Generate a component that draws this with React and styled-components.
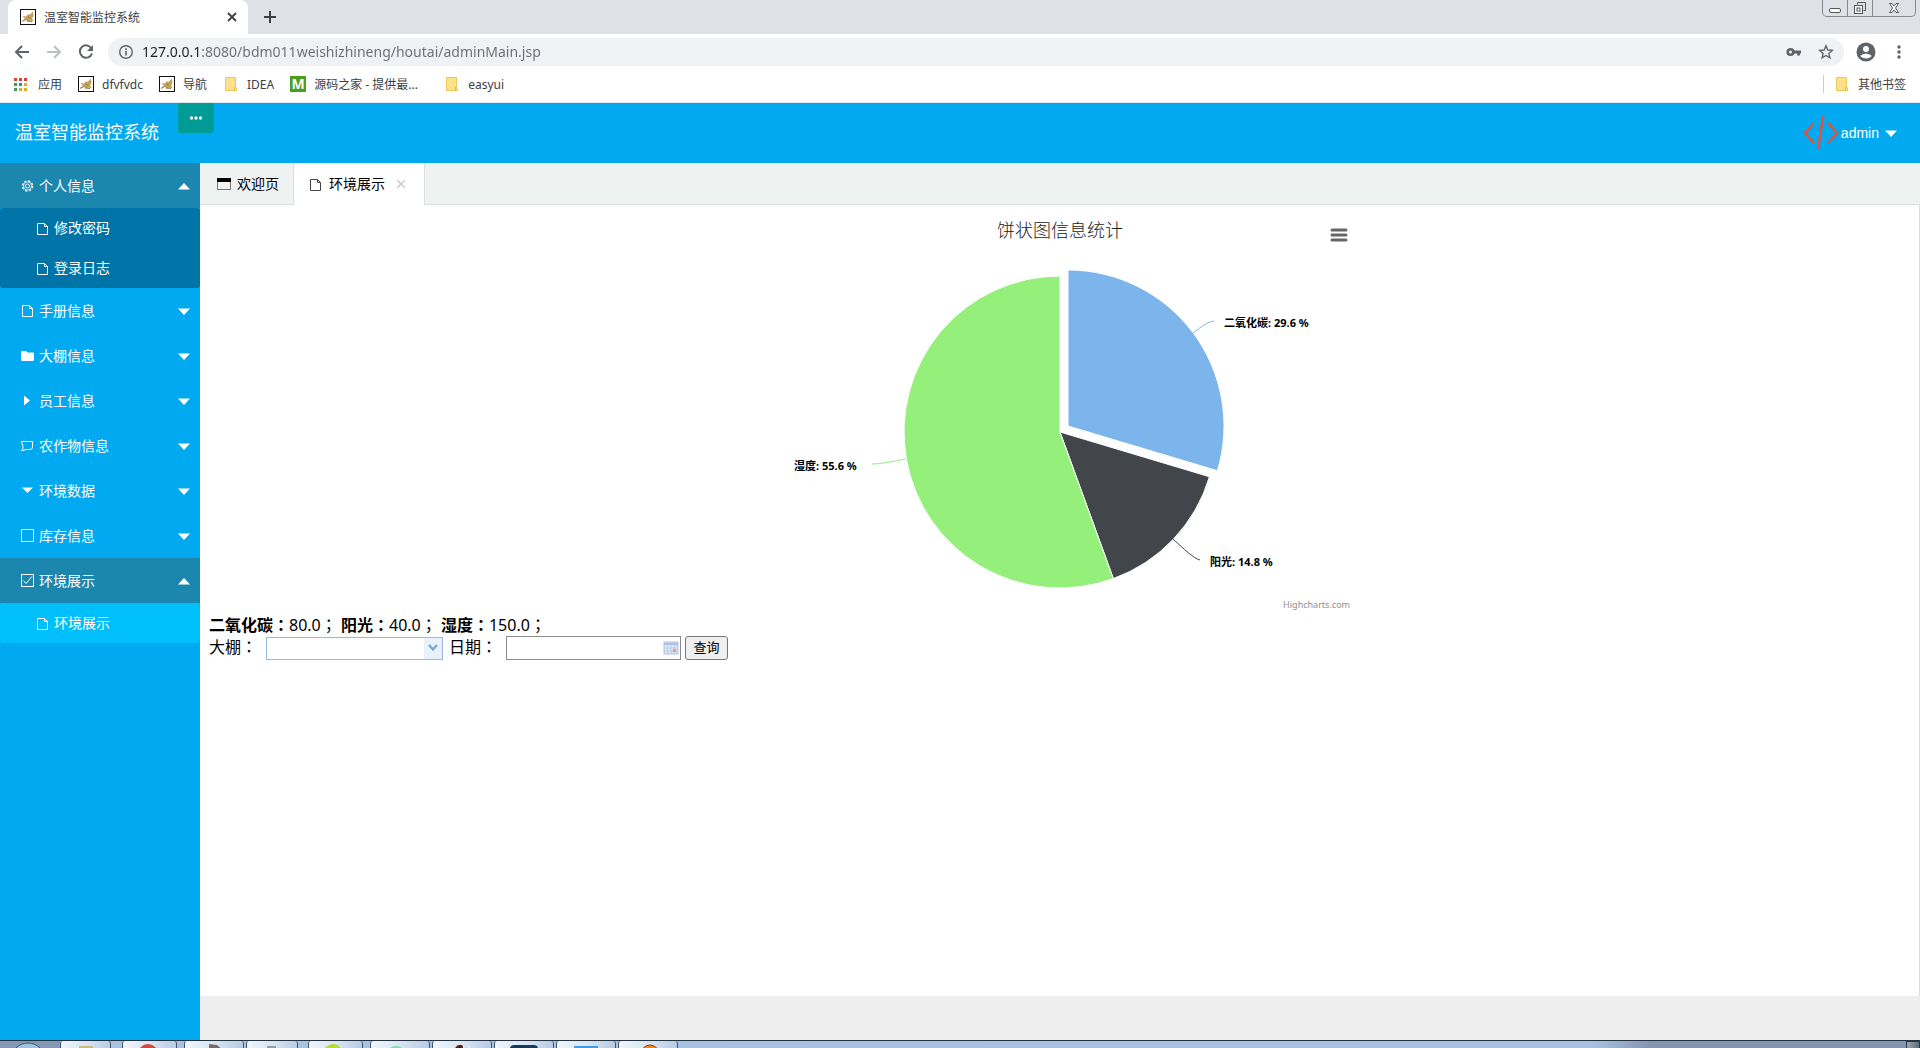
import React, { useState } from "react";
import styled, { createGlobalStyle } from "styled-components";

const Global = createGlobalStyle`
  *, *::before, *::after { box-sizing: border-box; }
  body { margin: 0; background: #fff; }
  body, button, input, select { font-family: "Noto Sans", "Noto Sans CJK SC", sans-serif; }
  button { cursor: pointer; }
`;

const Screen = styled.div`
  display: flex;
  flex-direction: column;
  min-height: 100vh;
`;

/* ---------- browser frame ---------- */

const TabStrip = styled.div`
  display: flex;
  height: 34px;
  padding-left: 8px;
  background: #dee1e6;
`;

const BrowserTab = styled.div`
  display: flex;
  align-items: center;
  gap: 8px;
  width: 240px;
  padding: 0 10px 0 12px;
  background: #fff;
  border-radius: 8px 8px 0 0;
  color: #3c4043;
  font-size: 12px;
`;

const TabTitle = styled.span`
  flex: 1;
`;

const PlainButton = styled.button`
  display: flex;
  align-items: center;
  justify-content: center;
  width: ${(p) => p.$w || 24}px;
  height: ${(p) => p.$h || 24}px;
  padding: 0;
  border: 0;
  background: none;
  color: ${(p) => p.$color || "#5f6368"};
`;

const NewTab = styled(PlainButton)`
  align-self: center;
  margin-left: 10px;
`;

const WindowControls = styled.div`
  display: flex;
  height: 17px;
  margin: 0 4px 0 auto;
  border: 1px solid #85888d;
  border-top: 0;
  border-radius: 0 0 5px 5px;

  button + button { border-left: 1px solid #85888d; }
`;

const Toolbar = styled.div`
  display: flex;
  align-items: center;
  height: 36px;
  padding: 0 0 0 10px;
  background: #fff;
`;

const NavButtons = styled.div`
  display: flex;
  gap: 8px;
`;

const Omnibox = styled.label`
  display: flex;
  flex: 1;
  align-items: center;
  gap: 8px;
  height: 28px;
  margin: 0 10px;
  padding: 0 6px 0 10px;
  background: #f0f2f6;
  border-radius: 14px;
  color: #5f6368;
`;

const Address = styled.input`
  flex: 1;
  min-width: 0;
  padding: 0;
  border: 0;
  outline: 0;
  color: transparent;
  background: linear-gradient(90deg, #202124 60px, #6a6e73 60px);
  background-clip: text;
  -webkit-background-clip: text;
  font-size: 14px;
  line-height: 20px;
`;

const Bookmarks = styled.nav`
  display: flex;
  align-items: center;
  gap: 16px;
  height: 33px;
  padding: 0 14px 4px;
  background: #fff;
  border-bottom: 1px solid #dfe9ef;
`;

const Bookmark = styled.a`
  display: flex;
  align-items: center;
  gap: 8px;
  min-width: ${(p) => p.$min || 0}px;
  color: #3c4043;
  font-size: 12px;
  text-decoration: none;
  white-space: nowrap;
`;

const OtherBookmarks = styled.div`
  margin-left: auto;
  padding-left: 10px;
  border-left: 1px solid #c9ccd1;
`;

/* ---------- application ---------- */

const Header = styled.header`
  display: flex;
  height: 60px;
  padding: 0 23px 0 15px;
  background: #01aaf0;
  color: #fff;
`;

const Brand = styled.h1`
  width: 163px;
  margin: 0;
  font-size: 18px;
  font-weight: 400;
  line-height: 58px;
`;

const MoreButton = styled.button`
  display: flex;
  align-items: center;
  justify-content: center;
  width: 36px;
  height: 30px;
  padding: 0;
  border: 0;
  border-radius: 2px;
  background: #009b95;
  color: #fff;
`;

const UserMenu = styled.button`
  display: flex;
  align-items: center;
  gap: 2px;
  margin-left: auto;
  padding: 0;
  border: 0;
  background: none;
  color: #fff;
  font-family: "Liberation Sans", Arial, sans-serif;
  font-size: 14px;
`;

const Body = styled.div`
  display: flex;
  flex: 1;
`;

const Sidebar = styled.nav`
  width: 200px;
  background: #01aaf0;
  color: #fff;
`;

const MenuHead = styled.button`
  display: flex;
  align-items: center;
  gap: 4px;
  width: 100%;
  height: 45px;
  padding: 0 10px 0 20px;
  border: 0;
  background: ${(p) => (p.$open ? "#1b86ae" : "transparent")};
  color: #fff;
  font-size: 14px;
  text-align: left;

  svg:last-child { margin-left: auto; }
`;

const Label = styled.span`
  padding-bottom: 2px;
`;

const SubMenu = styled.div`
  overflow: hidden;
  border-radius: 3px;
  background: #0074a6;
`;

const SubLink = styled.a`
  display: flex;
  align-items: center;
  gap: 4px;
  height: 40px;
  padding-left: 35px;
  background: ${(p) => (p.$active ? "#00bffb" : "transparent")};
  color: #fff;
  font-size: 14px;
  text-decoration: none;
`;

const Main = styled.main`
  display: flex;
  flex: 1;
  flex-direction: column;
  min-width: 0;
  background: #eee;
`;

const PageTabs = styled.div`
  display: flex;
  height: 42px;
  background: #eef2f0;
  border-bottom: 1px solid #dcdfdd;
`;

const PageTab = styled.div`
  display: flex;
  align-items: center;
  gap: 6px;
  height: ${(p) => (p.$active ? 42 : 41)}px;
  padding: ${(p) => (p.$active ? "0 13px 0 14px" : "0 14px 0 17px")};
  border-right: 1px solid #dcdfdd;
  background: ${(p) => (p.$active ? "#fff" : "transparent")};
  color: #000;
  font-size: 14px;
`;

const Content = styled.section`
  flex: 1;
  margin-bottom: 44px;
  padding: 8px 8px 8px 9px;
  border-right: 1px solid #ddd;
  background: #fff;
  color: #000;
  font-size: 16px;
`;

const ChartBox = styled.figure`
  position: relative;
  width: 600px;
  height: 400px;
  margin: 0 auto;
`;

const ChartMenu = styled(PlainButton)`
  position: absolute;
  top: 10px;
  right: 9px;
`;

const Summary = styled.p`
  margin: 0;
  line-height: 22px;
`;

/* colon and semicolon centred in their square */
const Mark = styled.span`
  font-family: "Noto Sans CJK TC", sans-serif;
`;

const Query = styled.form`
  display: flex;
  align-items: center;
  height: 24px;
`;

const FieldLabel = styled.label`
  padding-bottom: 3px;
  line-height: 20px;
`;

const Field = styled.div`
  display: flex;
  align-items: center;
  height: ${(p) => p.$h}px;
  width: ${(p) => p.$w}px;
  margin: 0 ${(p) => p.$after}px 0 ${(p) => p.$before}px;
  border: 1px solid ${(p) => p.$line};
  position: relative;

  select, input {
    flex: 1;
    min-width: 0;
    height: 100%;
    padding: 0 4px;
    border: 0;
    outline: 0;
    appearance: none;
    background: transparent;
    font-size: 12px;
  }
`;

const ComboArrow = styled.span`
  position: absolute;
  inset: 0 0 0 auto;
  display: flex;
  align-items: center;
  justify-content: center;
  width: 18px;
  background: #e9f1fc;
  pointer-events: none;
`;

const QueryButton = styled.button`
  width: 43px;
  height: 24px;
  padding: 0 0 2px;
  border: 1px solid #767676;
  border-radius: 3px;
  background: #efefef;
  color: #000;
  font-size: 13px;
  line-height: 20px;
`;

/* ---------- desktop task bar ---------- */

const TaskBar = styled.footer`
  display: flex;
  height: 8px;
  overflow: hidden;
  border-top: 1px solid #23303f;
  background: linear-gradient(90deg, #a9c3e0 0, #a6c2e0 83%, #8494b0 86%, #8494b0 100%);
`;

const StartArea = styled.div`
  display: flex;
  flex: none;
  justify-content: center;
  width: 60px;
  background: #8398b4;
`;

const TaskButton = styled.button`
  display: flex;
  flex: none;
  justify-content: center;
  width: ${(p) => p.$w}px;
  height: 40px;
  margin-right: ${(p) => p.$gap}px;
  padding: 0;
  border: 1px solid #3f536b;
  border-top: 0;
  border-radius: 3px;
  background: linear-gradient(100deg, #f1f6fb 0, #d6e3f2 50%, #afc6e2 100%);
`;

const ShowDesktop = styled.button`
  width: 14px;
  height: 40px;
  margin-left: auto;
  padding: 0;
  border: 1px solid #2b3947;
  background: linear-gradient(90deg, #9aa6ae, #5f6d78);
`;

/* ---------- drawings ---------- */

const Svg = ({ w = 16, h = w, box, children, ...rest }) => (
  <svg width={w} height={h} viewBox={box || `0 0 ${w} ${h}`} fill="none" aria-hidden="true" {...rest}>
    {children}
  </svg>
);

const CatIcon = () => (
  <Svg w={16}>
    <rect x="0.5" y="0.5" width="15" height="15" fill="#fff" stroke="#111" />
    <path d="M2 12 L5 10 L2.500 7 L6 7.500 L8 5 L9 6 L11 4.500 L13 2.500 L13.500 6 L13 8 L12 9.500 L14 12.500 L10 11.500 L8 12.500 L6 11 Z" fill="#c3a259" />
    <path d="M2 12.500 L5.500 10.500 M8 8 L9.500 9 M7 12 L12 12.500" stroke="#6b5832" strokeWidth="0.800" />
  </Svg>
);

const AppsIcon = () => {
  const colors = ["#d8443b", "#d8443b", "#d8443b", "#3c9e57", "#3b7de0", "#e3a928", "#3c9e57", "#e3a928", "#e3a928"];
  return (
    <Svg w={16}>
      {colors.map((c, i) => (
        <rect key={i} x={(i % 3) * 5} y={2 + Math.floor(i / 3) * 5} width="3" height="3" fill={c} />
      ))}
    </Svg>
  );
};

const FolderIcon = () => (
  <Svg w={16}>
    <path d="M2.500 1.500 H12.500 V11 L13.500 12 V14.500 H2.500 Z" fill="#fde08a" stroke="#ecc75a" />
    <path d="M11.500 14 V11" stroke="#e0b445" />
  </Svg>
);

const MBadge = styled.span`
  width: 16px;
  height: 16px;
  background: #4a9e22;
  color: #fff;
  font-size: 14px;
  font-weight: 700;
  line-height: 16px;
  text-align: center;
`;

const FileIcon = ({ color = "#fff" }) => (
  <Svg w={15}>
    <path d="M2.500 2.500 H9.500 L12.500 5.500 V13.500 H2.500 Z M9.500 2.500 V5.500 H12.500" stroke={color} />
  </Svg>
);

const GearIcon = () => (
  <Svg w={15}>
    <circle cx="7.500" cy="8" r="5" stroke="#fff" strokeWidth="1.400" strokeDasharray="2.300 1.627" />
    <circle cx="7.500" cy="8" r="4" stroke="#fff" strokeWidth="0.700" />
    <circle cx="7.500" cy="8" r="2" stroke="#fff" strokeWidth="0.900" />
  </Svg>
);

const SolidFolder = () => (
  <Svg w={15}>
    <path d="M1 4 Q1 3 2 3 H6 L7.500 4.500 H13 Q14 4.500 14 5.500 V12 Q14 13 13 13 H2 Q1 13 1 12 Z" fill="#fff" />
  </Svg>
);

const RightIcon = () => (
  <Svg w={15}>
    <path d="M4 2.500 L10 7.500 L4 12.500 Z" fill="#fff" />
  </Svg>
);

const DialogIcon = () => (
  <Svg w={15}>
    <path d="M1.500 3.500 H12.500 V9 Q12.500 11.500 10 11.500 H6 Q4.500 12.500 1.500 12.500 Q3.500 11 3 8.500 Z" stroke="#fff" />
  </Svg>
);

const DownIcon = () => (
  <Svg w={15}>
    <path d="M2 4.500 H13 L7.500 10 Z" fill="#fff" />
  </Svg>
);

const BoxIcon = ({ checked }) => (
  <Svg w={15}>
    <rect x="1.500" y="1.500" width="12" height="12" stroke="#fff" />
    {checked && <path d="M3.500 7.500 L6 10.500 L12 3.500" stroke="#fff" />}
  </Svg>
);

const Caret = ({ up }) => (
  <Svg w={12} h={8}>
    <path d={up ? "M0 7.500 L6 1 L12 7.500 Z" : "M0 1.500 H12 L6 8 Z"} fill="#fff" />
  </Svg>
);

const CodeLogo = () => (
  <Svg w={36} h={34}>
    <path d="M11 7 L2 17 L11 27 M25 7 L34 17 L25 27 M20 0 L15 34" stroke="#e2513d" strokeWidth="2.400" />
  </Svg>
);

const WindowIcon = () => (
  <Svg w={14} h={12}>
    <rect x="0.500" y="0.500" width="13" height="11" fill="#f4f4f4" stroke="#777" />
    <rect width="14" height="4" fill="#000" />
  </Svg>
);

const CalendarIcon = () => (
  <Svg w={16}>
    <rect x="1" y="2" width="14" height="12" fill="#dfe9f8" stroke="#a9bfe2" />
    <path d="M1 4 H15" stroke="#a9bfe6" strokeWidth="2" />
    <path d="M4.500 5 V14 M8 5 V14 M11.500 5 V14 M1 8 H15 M1 11 H15" stroke="#b9cbe8" />
    <rect x="10" y="9" width="3" height="3" fill="#eba06c" />
  </Svg>
);

/* ---------- pie chart ---------- */

const RADIUS = 156;
const SLICES = [
  { name: "二氧化碳", value: 80, color: "#7cb5ec", cx: 308, cy: 213, line: "M454 108 C447 109 441 114 433 120", x: 464, y: 114 },
  { name: "阳光", value: 40, color: "#424549", cx: 300, cy: 219, line: "M440 347 C433 345 424 336 413 326", x: 450, y: 353 },
  { name: "湿度", value: 150, color: "#94f07b", cx: 300, cy: 219, line: "M112 251 C119 251 131 249 146 246", x: 34, y: 257 },
];
const TOTAL = SLICES.reduce((sum, s) => sum + s.value, 0);

function wedge(cx, cy, from, to) {
  const at = (t) => `${cx + RADIUS * Math.sin(t * 2 * Math.PI)} ${cy - RADIUS * Math.cos(t * 2 * Math.PI)}`;
  return `M${cx} ${cy} L${at(from)} A${RADIUS} ${RADIUS} 0 ${to - from > 0.5 ? 1 : 0} 1 ${at(to)} Z`;
}

const ChartTitle = styled.text`
  font-size: 18px;
  font-weight: 300;
  fill: #222;
  text-anchor: middle;
`;
const ChartLabel = styled.text`
  font-size: 11px;
  font-weight: 700;
  fill: #000;
`;
const ChartCredit = styled.text`
  font-size: 9px;
  fill: #909090;
  text-anchor: end;
`;

function PieChart() {
  let sum = 0;
  return (
    <ChartBox>
      <svg width="600" height="400" viewBox="0 0 600 400" role="img" aria-label="饼状图信息统计">
        <ChartTitle x="300" y="24">饼状图信息统计</ChartTitle>
        {SLICES.map((s) => {
          const from = sum / TOTAL;
          sum += s.value;
          return (
            <g key={s.name}>
              <path d={wedge(s.cx, s.cy, from, sum / TOTAL)} fill={s.color} stroke="#fff" strokeLinejoin="round" />
              <path d={s.line} fill="none" stroke={s.color} />
              <ChartLabel x={s.x} y={s.y}>{`${s.name}: ${((s.value / TOTAL) * 100).toFixed(1)} %`}</ChartLabel>
            </g>
          );
        })}
        <ChartCredit x="590" y="395">Highcharts.com</ChartCredit>
      </svg>
      <ChartMenu type="button" aria-label="Chart context menu">
        <Svg w={18} h={16}>
          <path d="M2 3 H16 M2 8 H16 M2 13 H16" stroke="#666" strokeWidth="3" strokeLinecap="round" />
        </Svg>
      </ChartMenu>
    </ChartBox>
  );
}

/* ---------- data ---------- */

const MENU = [
  { label: "个人信息", icon: <GearIcon />, items: ["修改密码", "登录日志"] },
  { label: "手册信息", icon: <FileIcon /> },
  { label: "大棚信息", icon: <SolidFolder /> },
  { label: "员工信息", icon: <RightIcon /> },
  { label: "农作物信息", icon: <DialogIcon /> },
  { label: "环境数据", icon: <DownIcon /> },
  { label: "库存信息", icon: <BoxIcon /> },
  { label: "环境展示", icon: <BoxIcon checked />, items: ["环境展示"] },
];

const BOOKMARKS = [
  { label: "应用", icon: <AppsIcon /> },
  { label: "dfvfvdc", icon: <CatIcon /> },
  { label: "导航", icon: <CatIcon /> },
  { label: "IDEA", icon: <FolderIcon /> },
  { label: "源码之家 - 提供最...", icon: <MBadge>M</MBadge>, min: 138 },
  { label: "easyui", icon: <FolderIcon /> },
];

const READINGS = [
  { name: "二氧化碳", value: "80.0" },
  { name: "阳光", value: "40.0" },
  { name: "湿度", value: "150.0" },
];

const TASKS = [
  { w: 51, gap: 11, art: <rect x="8" y="5" width="14" height="9" fill="#cdbb84" /> },
  { w: 55, gap: 7, art: <circle cx="13" cy="13" r="10" fill="#d3493e" /> },
  { w: 60, gap: 2, art: <path d="M10 3 L18 4 L24 9 L10 8 Z" fill="#7b6a66" /> },
  { w: 52, gap: 10, art: <rect x="10" y="5" width="9" height="4" fill="#8f9da8" /> },
  { w: 55, gap: 7, art: <circle cx="12" cy="13" r="8" stroke="#b7dc2c" strokeWidth="4" /> },
  { w: 60, gap: 2, art: <circle cx="11" cy="15" r="10" fill="#7edca4" /> },
  { w: 60, gap: 2, art: <path d="M6 10 Q10 1 16 4 L17 10 Z M20 3 L24 9" fill="#4a1c14" stroke="#eee" /> },
  { w: 60, gap: 2, art: <rect x="1" y="4" width="28" height="20" rx="4" fill="#17395f" /> },
  { w: 60, gap: 2, art: <rect x="3" y="5" width="24" height="12" fill="#3f9be6" /> },
  { w: 60, gap: 0, art: <circle cx="17" cy="13" r="9" fill="#f08a14" stroke="#963d10" /> },
];

export default function App() {
  const [open, setOpen] = useState({ 个人信息: true, 环境展示: true });

  return (
    <Screen>
      <Global />
      <TabStrip>
        <BrowserTab>
          <CatIcon />
          <TabTitle>温室智能监控系统</TabTitle>
          <PlainButton $w={12} type="button" aria-label="关闭">
            <Svg w={10}>
              <path d="M1 1 L9 9 M9 1 L1 9" stroke="#3c4043" strokeWidth="1.800" />
            </Svg>
          </PlainButton>
        </BrowserTab>
        <NewTab type="button" aria-label="新标签页">
          <Svg w={12}>
            <path d="M6 0 V12 M0 6 H12" stroke="#3c4043" strokeWidth="2" />
          </Svg>
        </NewTab>
        <WindowControls>
          <PlainButton $w={24} $h={16} type="button" aria-label="最小化">
            <Svg w={14} h={14}>
              <rect x="1.500" y="7.500" width="11" height="4" rx="1.500" fill="#fff" stroke="#555" />
            </Svg>
          </PlainButton>
          <PlainButton $w={25} $h={16} type="button" aria-label="还原">
            <Svg w={14} h={14}>
              <path d="M4.500 3.500 V1.500 H12.500 V9.500 H10.500" stroke="#555" />
              <rect x="1.500" y="4.500" width="8" height="8" fill="#fff" stroke="#555" />
              <rect x="4" y="7" width="3" height="3" stroke="#555" />
            </Svg>
          </PlainButton>
          <PlainButton $w={43} $h={16} type="button" aria-label="关闭窗口">
            <Svg w={12}>
              <path d="M1.500 1.500 H4 L6 4 L8 1.500 H10.500 L7.500 6 L10.500 10.500 H8 L6 8 L4 10.500 H1.500 L4.500 6 Z" fill="#fff" stroke="#555" />
            </Svg>
          </PlainButton>
        </WindowControls>
      </TabStrip>

      <Toolbar>
        <NavButtons>
          <PlainButton type="button" aria-label="后退">
            <Svg w={16}>
              <path d="M15 8 H2 M8 2 L2 8 L8 14" stroke="#5f6368" strokeWidth="2" />
            </Svg>
          </PlainButton>
          <PlainButton type="button" aria-label="前进">
            <Svg w={16}>
              <path d="M1 8 H14 M8 2 L14 8 L8 14" stroke="#bdc0c4" strokeWidth="2" />
            </Svg>
          </PlainButton>
          <PlainButton type="button" aria-label="重新加载">
            <Svg w={16}>
              <path d="M13.500 4.500 A6.200 6.200 0 1 0 14 9.500" stroke="#5f6368" strokeWidth="2" />
              <path d="M15 1 V7 H9 Z" fill="#5f6368" />
            </Svg>
          </PlainButton>
        </NavButtons>
        <Omnibox>
          <Svg w={16}>
            <circle cx="8" cy="8" r="6.300" stroke="#5f6368" strokeWidth="1.400" />
            <path d="M8 7 V11.500 M8 4.300 V6" stroke="#5f6368" strokeWidth="1.600" />
          </Svg>
          <Address aria-label="地址栏" defaultValue="127.0.0.1:8080/bdm011weishizhineng/houtai/adminMain.jsp" />
          <PlainButton type="button" aria-label="密码">
            <Svg w={16}>
              <circle cx="4.500" cy="8" r="2.800" stroke="#5f6368" strokeWidth="2.600" />
              <path d="M7.500 8 H15 M12.500 8 V11.500" stroke="#5f6368" strokeWidth="2.800" />
            </Svg>
          </PlainButton>
          <PlainButton type="button" aria-label="收藏">
            <Svg w={16}>
              <path d="M8 1.800 L9.800 6 L14.300 6.400 L10.900 9.400 L11.900 13.900 L8 11.500 L4.100 13.900 L5.100 9.400 L1.700 6.400 L6.200 6 Z" stroke="#5f6368" strokeWidth="1.400" />
            </Svg>
          </PlainButton>
        </Omnibox>
        <PlainButton type="button" aria-label="用户">
          <Svg w={20}>
            <circle cx="10" cy="10" r="9.500" fill="#5f6368" />
            <circle cx="10" cy="7" r="3" fill="#fff" />
            <path d="M4 14 Q10 9 16 14 Q10 19 4 14 Z" fill="#fff" />
          </Svg>
        </PlainButton>
        <PlainButton $w={42} type="button" aria-label="菜单">
          <Svg w={4} h={14}>
            <circle cx="2" cy="2" r="1.700" fill="#5f6368" />
            <circle cx="2" cy="7" r="1.700" fill="#5f6368" />
            <circle cx="2" cy="12" r="1.700" fill="#5f6368" />
          </Svg>
        </PlainButton>
      </Toolbar>

      <Bookmarks aria-label="书签">
        {BOOKMARKS.map((b) => (
          <Bookmark key={b.label} href="#" $min={b.min}>
            {b.icon}
            {b.label}
          </Bookmark>
        ))}
        <OtherBookmarks>
          <Bookmark href="#">
            <FolderIcon />
            其他书签
          </Bookmark>
        </OtherBookmarks>
      </Bookmarks>

      <Header>
        <Brand>温室智能监控系统</Brand>
        <MoreButton type="button" aria-label="更多">
          <Svg w={14} h={4}>
            <circle cx="2.500" cy="2" r="1.700" fill="#fff" />
            <circle cx="7" cy="2" r="1.700" fill="#fff" />
            <circle cx="11.500" cy="2" r="1.700" fill="#fff" />
          </Svg>
        </MoreButton>
        <UserMenu type="button">
          <CodeLogo />
          <span>admin</span>
          <Svg w={16} h={8}>
            <path d="M4 1.500 H16 L10 8 Z" fill="#fff" />
          </Svg>
        </UserMenu>
      </Header>

      <Body>
        <Sidebar aria-label="主菜单">
          {MENU.map((m) => {
            const shown = Boolean(open[m.label]);
            return (
              <React.Fragment key={m.label}>
                <MenuHead
                  type="button"
                  $open={shown}
                  aria-expanded={shown}
                  onClick={() => setOpen({ ...open, [m.label]: !shown })}
                >
                  {m.icon}
                  <Label>{m.label}</Label>
                  <Caret up={shown} />
                </MenuHead>
                {shown && m.items && (
                  <SubMenu>
                    {m.items.map((item) => (
                      <SubLink key={item} href="#" $active={item === "环境展示"}>
                        <FileIcon />
                        <Label>{item}</Label>
                      </SubLink>
                    ))}
                  </SubMenu>
                )}
              </React.Fragment>
            );
          })}
        </Sidebar>

        <Main>
          <PageTabs>
            <PageTab>
              <WindowIcon />
              <Label>欢迎页</Label>
            </PageTab>
            <PageTab $active>
              <FileIcon color="#444" />
              <Label>环境展示</Label>
              <PlainButton $w={20} type="button" aria-label="关闭标签">
                <Svg w={10}>
                  <path d="M1 1 L9 9 M9 1 L1 9" stroke="#c8c8c8" strokeWidth="1.300" />
                </Svg>
              </PlainButton>
            </PageTab>
          </PageTabs>
          <Content>
            <PieChart />
            <Summary>
              {READINGS.map((r) => (
                <React.Fragment key={r.name}>
                  <b>
                    {r.name}
                    <Mark>：</Mark>
                  </b>
                  {r.value}
                  <Mark>；</Mark>{" "}
                </React.Fragment>
              ))}
            </Summary>
            <Query onSubmit={(e) => e.preventDefault()}>
              <FieldLabel htmlFor="house">
                大棚<Mark>：</Mark>
              </FieldLabel>
              <Field $w={177} $h={23} $before={9} $after={6} $line="#95b8e7">
                <select id="house" defaultValue="">
                  <option value=""></option>
                </select>
                <ComboArrow>
                  <Svg w={12} h={8}>
                    <path d="M2 1 L6 5.500 L10 1" stroke="#7aa6dc" strokeWidth="2.400" />
                  </Svg>
                </ComboArrow>
              </Field>
              <FieldLabel htmlFor="date">
                日期<Mark>：</Mark>
              </FieldLabel>
              <Field $w={175} $h={24} $before={9} $after={4} $line="#8c8c8c">
                <input id="date" type="text" />
                <PlainButton $w={18} $h={18} type="button" aria-label="选择日期">
                  <CalendarIcon />
                </PlainButton>
              </Field>
              <QueryButton type="submit">查询</QueryButton>
            </Query>
          </Content>
        </Main>
      </Body>

      <TaskBar>
        <StartArea>
          <Svg w={40} h={40}>
            <circle cx="18" cy="19" r="17" fill="#9fc3da" stroke="#315a7c" />
          </Svg>
        </StartArea>
        {TASKS.map((t, i) => (
          <TaskButton key={i} $w={t.w} $gap={t.gap} type="button" aria-label={`任务 ${i + 1}`}>
            <Svg w={30} h={30}>{t.art}</Svg>
          </TaskButton>
        ))}
        <ShowDesktop type="button" aria-label="显示桌面" />
      </TaskBar>
    </Screen>
  );
}
